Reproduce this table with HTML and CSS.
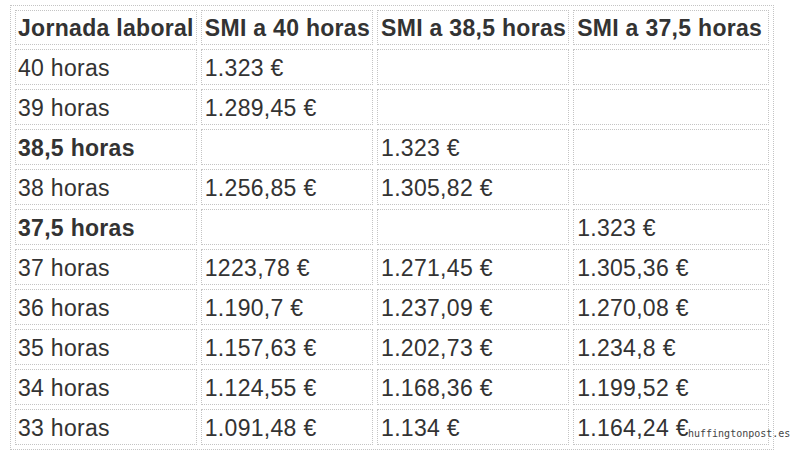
FILE: index.html
```html
<!DOCTYPE html>
<html lang="es">
<head>
<meta charset="utf-8">
<title>SMI por jornada</title>
<link rel="stylesheet" href="styles.css">
</head>
<body>
<div class="page">
<table class="smi">
<thead>
<tr><th class="c1">Jornada laboral</th><th class="c2">SMI a 40 horas</th><th class="c3">SMI a 38,5 horas</th><th class="c4">SMI a 37,5 horas</th></tr>
</thead>
<tbody>
<tr><td>40 horas</td><td>1.323 €</td><td></td><td></td></tr>
<tr><td>39 horas</td><td>1.289,45 €</td><td></td><td></td></tr>
<tr><td class="b">38,5 horas</td><td></td><td>1.323 €</td><td></td></tr>
<tr><td>38 horas</td><td>1.256,85 €</td><td>1.305,82 €</td><td></td></tr>
<tr><td class="b">37,5 horas</td><td></td><td></td><td>1.323 €</td></tr>
<tr><td>37 horas</td><td>1223,78 €</td><td>1.271,45 €</td><td>1.305,36 €</td></tr>
<tr><td>36 horas</td><td>1.190,7 €</td><td>1.237,09 €</td><td>1.270,08 €</td></tr>
<tr><td>35 horas</td><td>1.157,63 €</td><td>1.202,73 €</td><td>1.234,8 €</td></tr>
<tr><td>34 horas</td><td>1.124,55 €</td><td>1.168,36 €</td><td>1.199,52 €</td></tr>
<tr><td>33 horas</td><td>1.091,48 €</td><td>1.134 €</td><td>1.164,24 €</td></tr>
</tbody>
</table>
<div class="mark">huffingtonpost.es</div>
</div>
</body>
</html>
```
FILE: styles.css
```css
html, body {
  margin: 0;
  padding: 0;
  background: #fff;
}
.page {
  position: relative;
  width: 800px;
  height: 450px;
  overflow: hidden;
  padding: 5px 0 0 10px;
  box-sizing: border-box;
}
.smi {
  border: 1px dotted #c4c4c4;
  border-collapse: separate;
  border-spacing: 4px;
  font-family: "Liberation Sans", Arial, sans-serif;
  font-size: 23px;
  letter-spacing: 0.3px;
  color: #333;
  table-layout: fixed;
}
.smi th, .smi td {
  box-sizing: border-box;
  border: 1px dotted #c4c4c4;
  padding: 0 2px;
  text-align: left;
  white-space: nowrap;
}
.smi th {
  height: 35px;
  font-weight: bold;
  padding-top: 1px;
}
.smi td {
  height: 36px;
  padding-top: 2px;
}
.smi td + td, .smi th + th {
  padding-left: 3px;
}
.smi .c1 { width: 181px; }
.smi .c2 { width: 171px; }
.smi .c3 { width: 192px; }
.smi .c4 { width: 196px; }
.smi .b { font-weight: bold; }
.mark {
  position: absolute;
  left: 688px;
  top: 428px;
  font-family: "DejaVu Sans Mono", monospace;
  font-size: 10px;
  color: #444;
  text-shadow: 0 0 2px #fff;
  letter-spacing: 0;
}
```
